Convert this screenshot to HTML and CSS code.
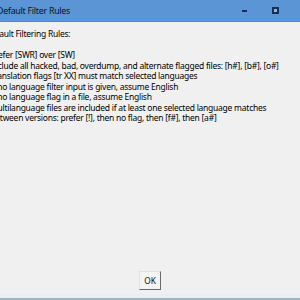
FILE: index.html
```html
<!DOCTYPE html>
<html lang="en">

<head>
    <meta charset="UTF-8">
    <title>Default Filter Rules</title>
    <link rel="stylesheet" href="styles.css">
</head>

<body>
    <div class="window">
        <div class="titlebar">
            <span class="title">Default Filter Rules</span>
            <div class="controls">
                <span class="btn-min"></span>
                <span class="btn-max"></span>
            </div>
        </div>

        <div class="content">
            <p class="heading">Default Filtering Rules:</p>
            <ul class="rules">
                <li>Prefer [SWR] over [SW]</li>
                <li>Include all hacked, bad, overdump, and alternate flagged files: [h#], [b#], [o#]</li>
                <li>Translation flags [tr XX] must match selected languages</li>
                <li>If no language filter input is given, assume English</li>
                <li>If no language flag in a file, assume English</li>
                <li>Multilanguage files are included if at least one selected language matches</li>
                <li>Between versions: prefer [!], then no flag, then [f#], then [a#]</li>
            </ul>
        </div>

        <div class="footer">
            <button class="ok">OK</button>
        </div>
        <div class="edge"></div>
    </div>
</body>

</html>
```
FILE: styles.css
```css
body {
    margin: 0;
    width: 300px;
    height: 300px;
    overflow: hidden;
    font-family: "Noto Sans", "Open Sans", sans-serif;
    font-size: 8.5px;
    letter-spacing: -0.25px;
    color: #000;
    background-color: #f0f0f0;
}

.window {
    height: 300px;
    display: flex;
    flex-direction: column;
}

.titlebar {
    height: 21px;
    flex: none;
    display: flex;
    align-items: center;
    justify-content: space-between;
    background-color: #5b95d6;
    border-bottom: 1px solid #4f87c8;
}

.title {
    margin-left: -3px;
    font-size: 8.8px;
    color: #0c1420;
}

.controls {
    display: flex;
    align-items: center;
    gap: 25px;
    margin-right: 21px;
}

.btn-min {
    width: 5px;
    height: 2px;
    background-color: #14305a;
}

.btn-max {
    width: 3px;
    height: 3px;
    border: 2px solid #14305a;
    background-color: #8fb3dc;
}

.content {
    flex: 1;
    padding-top: 6px;
}

.heading {
    margin: 0 0 11px -14px;
    line-height: 11px;
}

.rules {
    list-style: none;
    margin: 0 0 0 -10px;
    padding: 0;
    line-height: 10.5px;
}

.rules li {
    white-space: nowrap;
}

.footer {
    flex: none;
    display: flex;
    justify-content: center;
    padding-bottom: 4px;
}

.ok {
    width: 22px;
    height: 19px;
    padding: 0;
    font-family: inherit;
    font-size: 8.3px;
    color: #111;
    background-color: #f4f4f4;
    border: 1px solid #e1e1e1;
    border-right-color: #6a6a6a;
    border-bottom-color: #6a6a6a;
}

.edge {
    flex: none;
    height: 4px;
    background-color: #e8eef4;
    border-bottom: 2px solid #9cb6c6;
}
```
